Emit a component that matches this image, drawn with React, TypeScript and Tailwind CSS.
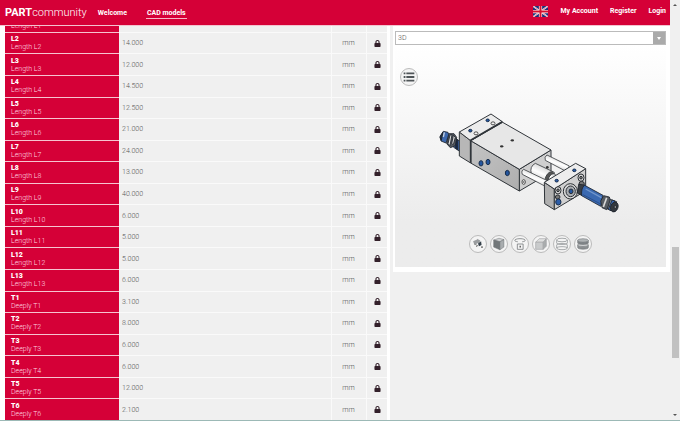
import { useState } from 'react';
import type { ReactNode } from 'react';
import { FaLock } from 'react-icons/fa';

const dimensions = [
  { name: 'L1', label: 'Length L1', value: '32.000' },
  { name: 'L2', label: 'Length L2', value: '14.000' },
  { name: 'L3', label: 'Length L3', value: '12.000' },
  { name: 'L4', label: 'Length L4', value: '14.500' },
  { name: 'L5', label: 'Length L5', value: '12.500' },
  { name: 'L6', label: 'Length L6', value: '21.000' },
  { name: 'L7', label: 'Length L7', value: '24.000' },
  { name: 'L8', label: 'Length L8', value: '13.000' },
  { name: 'L9', label: 'Length L9', value: '40.000' },
  { name: 'L10', label: 'Length L10', value: '6.000' },
  { name: 'L11', label: 'Length L11', value: '5.000' },
  { name: 'L12', label: 'Length L12', value: '5.000' },
  { name: 'L13', label: 'Length L13', value: '6.000' },
  { name: 'T1', label: 'Deeply T1', value: '3.100' },
  { name: 'T2', label: 'Deeply T2', value: '8.000' },
  { name: 'T3', label: 'Deeply T3', value: '6.000' },
  { name: 'T4', label: 'Deeply T4', value: '6.000' },
  { name: 'T5', label: 'Deeply T5', value: '12.000' },
  { name: 'T6', label: 'Deeply T6', value: '2.100' },
];

const UnionJack = () => (
  <svg viewBox="0 0 30 22" className="h-[11px] w-[15px]" role="img" aria-label="English">
    <rect width="30" height="22" fill="#1b2f7a" />
    <path d="M0 0L30 22M30 0L0 22" stroke="#fff" strokeWidth="3" />
    <path d="M0 0L30 22M30 0L0 22" stroke="#d8203c" strokeWidth="1" />
    <path d="M15 0V22M0 11H30" stroke="#fff" strokeWidth="6.5" />
    <path d="M15 0V22M0 11H30" stroke="#d5102f" strokeWidth="4" />
  </svg>
);

const Header = () => (
  <header className="relative z-10 flex h-[26px] shrink-0 items-center border-b border-[#f3c3cf] bg-[#d50037] pr-1 pl-[5px] text-[7px] leading-[10px] font-bold text-white">
    <a href="#home" className="text-[11px] leading-[14px] font-light">
      <span className="font-bold">PART</span>community
    </a>
    <nav className="ml-[10px] flex gap-[18px]">
      <a href="#welcome" className="border-b border-transparent px-px pt-px">Welcome</a>
      <a href="#models" className="border-b border-[#f6b8c6] px-px pt-px">CAD models</a>
    </nav>
    <div className="mb-[3px] ml-auto flex items-center gap-3">
      <a href="#language">
        <UnionJack />
      </a>
      <a href="#account">My Account</a>
      <a href="#register">Register</a>
      <a href="#login">Login</a>
    </div>
  </header>
);

const DimensionTable = () => (
  <div className="flex h-full min-h-0 flex-col justify-end overflow-hidden bg-white pr-[3px] pl-[5px]">
    <table className="h-[104%] w-full shrink-0 table-fixed border-collapse text-[7px] leading-[8px]">
      <colgroup>
        <col className="w-[114px]" />
        <col />
        <col className="w-[35px]" />
        <col className="w-[21px]" />
      </colgroup>
      <tbody>
        {dimensions.map((row) => (
          <tr key={row.name} className="border-t border-[#fafafa] bg-[#f0f0f0]">
            <th scope="row" className="border-t border-[#f6c4d0] bg-[#d50037] p-0 pl-[6px] text-left font-light text-[#ffd9e2]">
              <div className="font-black text-white">{row.name}</div>
              <div>{row.label}</div>
            </th>
            <td className="p-0 pl-[3px] font-light text-[#555]">{row.value}</td>
            <td className="border-l border-[#fafafa] p-0 text-center font-light text-[#555]">mm</td>
            <td className="border-l border-[#fafafa] p-0 pl-[2px]">
              <FaLock size={7} className="mx-auto text-[#33202a]" />
            </td>
          </tr>
        ))}
      </tbody>
    </table>
  </div>
);

const CylinderModel = () => (
  <svg viewBox="18 18 570 330" className="mt-[15px] h-[110px] w-[190px]" role="img" aria-label="3D model">
    <defs>
      <linearGradient id="rod" x1="0" y1="1" x2=".5" y2="0">
        <stop offset="0" stopColor="#aaa" />
        <stop offset=".6" stopColor="#fff" />
        <stop offset="1" stopColor="#ccc" />
      </linearGradient>
      <linearGradient id="side" x1="0" y1="0" x2="1" y2="1">
        <stop offset="0" stopColor="#c4c4c4" />
        <stop offset="1" stopColor="#aeaeae" />
      </linearGradient>
    </defs>

    {/* rear fitting */}
    <g stroke="#1e242c" strokeWidth="2.5" strokeLinejoin="round">
      <path d="M73 111L92 122V153L71 139Z" fill="#3d68ad" />
      <path d="M77 113L83 116V146L77 142Z" fill="#172a49" />
      <path d="M56 98L72 98L80 109L76 134L61 140L50 128Z" fill="#555a60" />
      <path d="M60 102L66 101L60 134L54 128Z" fill="#ddd" />
      <path d="M70 103L76 109L70 131L65 128Z" fill="#ccc" />
      <path d="M40 91L54 94L56 101L48 126L33 120L30 106Z" fill="#3d68ad" />
      <path d="M39 93L34 118L30 110Z" fill="#263240" />
      <path d="M43 94L40 108" stroke="#c7d3e5" strokeWidth="4" />
    </g>

    {/* housing */}
    <g stroke="#30353a" strokeWidth="3" strokeLinejoin="round">
      <path d="M268 205L363 147V214L268 270Z" fill="#cfcfcf" />
      <path d="M122 119L268 205V270L122 186Z" fill="url(#side)" />
      <path d="M122 119L218 64L363 147L268 205Z" fill="#e7e7e7" />
      <path d="M88 93L122 119V186L88 165Z" fill="#b7b7b7" />
      <path d="M88 93L183 39L217 62L122 119Z" fill="#ececec" />
      <path d="M122 186V118L217 62" fill="none" strokeWidth="5" />
    </g>
    <g fill="#24569f" stroke="#172d4c" strokeWidth="3">
      <ellipse cx="153" cy="187" rx="6" ry="8" />
      <ellipse cx="174" cy="183" rx="6" ry="8" />
      <ellipse cx="232" cy="216" rx="6" ry="8" />
      <ellipse cx="121" cy="89" rx="5" ry="4" />
      <ellipse cx="173" cy="58" rx="5" ry="4" />
    </g>
    <g fill="#f4f4f4" stroke="#333" strokeWidth="2.5">
      <ellipse cx="138" cy="97" rx="6" ry="4.5" />
      <ellipse cx="189" cy="67" rx="6" ry="4.5" />
      <ellipse cx="281" cy="243" rx="5" ry="7" />
    </g>
    <g fill="#333">
      <ellipse cx="215" cy="136" rx="5" ry="3.5" />
      <ellipse cx="247" cy="118" rx="5" ry="3.5" />
      <circle cx="281" cy="243" r="2" />
    </g>

    {/* guide rods and piston rod */}
    <g fill="url(#rod)" stroke="#3b3f42" strokeWidth="2.5" strokeLinejoin="round">
      <path d="M351 162L418 195L410 212L346 178Q342 167 351 162Z" />
      <path d="M316 187L373 214L362 251L304 219Q298 196 316 187Z" />
      <ellipse cx="359" cy="231" rx="12" ry="20" transform="rotate(25 359 231)" fill="#555" />
      <ellipse cx="366" cy="235" rx="11" ry="18" transform="rotate(25 366 235)" />
      <path d="M281 205L350 238V258L277 220Q273 209 281 205Z" />
    </g>
    <circle cx="352" cy="199" r="4" fill="#333" />

    {/* front plate */}
    <g stroke="#30353a" strokeWidth="3" strokeLinejoin="round">
      <path d="M343 244L373 264V326L344 308Z" fill="#b0b0b0" />
      <path d="M373 264L467 203V258L456 276L373 326Z" fill="#d0d0d0" />
      <path d="M343 244L437 187L467 203L373 264Z" fill="#ededed" />
    </g>
    <g fill="#d8d8d8" stroke="#2c3034" strokeWidth="3">
      <ellipse cx="421" cy="271" rx="21" ry="23" />
      <ellipse cx="422" cy="271" rx="14" ry="16" fill="#a9adb2" />
      <ellipse cx="423" cy="271" rx="6" ry="7" fill="#24569f" />
      <ellipse cx="384" cy="268" rx="9" ry="11" />
      <circle cx="384" cy="268" r="4" fill="#777" />
      <ellipse cx="453" cy="230" rx="9" ry="11" />
      <circle cx="453" cy="230" r="4" fill="#777" />
      <ellipse cx="383" cy="288" rx="7" ry="6" fill="#777" />
      <ellipse cx="455" cy="249" rx="8" ry="8" fill="#777" />
    </g>
    <g fill="#2c5da8" stroke="#172d4c" strokeWidth="3">
      <ellipse cx="380" cy="239" rx="5" ry="4" />
      <ellipse cx="433" cy="208" rx="5" ry="4" />
      <ellipse cx="385" cy="303" rx="8" ry="9" />
    </g>

    {/* front shock absorber */}
    <g stroke="#1e242c" strokeWidth="2.5" strokeLinejoin="round">
      <path d="M446 250L463 252L468 266L456 284L442 276Z" fill="#3a3f45" />
      <path d="M464 253L519 283L512 316L455 284Q453 260 464 253Z" fill="#3a69b1" />
      <path d="M467 264L514 290" stroke="#7196cb" strokeWidth="4" />
      <path d="M459 281L512 309" stroke="#2a4f8c" strokeWidth="3" />
      <path d="M521 284L538 288L543 303L530 326L516 320L512 300Z" fill="#555a60" />
      <path d="M530 290L520 318" stroke="#d8d8d8" strokeWidth="5" />
      <path d="M541 295L560 302L555 332L532 324Z" fill="#8b9299" />
      <path d="M546 297L555 300L543 329L535 325Z" fill="#3a69b1" />
      <ellipse cx="553" cy="318" rx="11" ry="15" transform="rotate(20 553 318)" fill="#33383e" />
      <circle cx="556" cy="318" r="4" fill="#9a9a9a" />
    </g>
  </svg>
);

const viewerTools: { label: string; drawing: ReactNode }[] = [
  {
    label: 'Animate',
    drawing: (
      <>
        <path d="M9 14L18 10L21 17L12 22ZM18 8L25 12L23 18L19 17Z" fill="#9a9d9f" />
        <path d="M20 19L27 14L28 22L22 25Z" fill="#35404a" />
        <path d="M12 20L20 24" stroke="#888" strokeWidth="2" />
        <circle cx="17" cy="25" r="1.5" fill="#777" />
        <circle cx="29" cy="27" r="2" fill="#555" />
      </>
    ),
  },
  {
    label: 'Views',
    drawing: (
      <g stroke="#62676a" strokeWidth="1">
        <path d="M8 11L20 7L31 10L22 15Z" fill="#cfd1d2" />
        <path d="M8 11L22 15V33L8 27Z" fill="#72777a" />
        <path d="M22 15L31 10V27L22 33Z" fill="#a9adaf" />
      </g>
    ),
  },
  {
    label: 'Rotate',
    drawing: (
      <g fill="none" stroke="#777b7e" strokeWidth="1.8">
        <path d="M15 15C4 14 7 8 20 8S36 14 25 15" />
        <path d="M14 20H27V32H14Z" />
        <path d="M19 24H22V28H19Z" fill="#555" stroke="none" />
      </g>
    ),
  },
  {
    label: 'Perspective',
    drawing: (
      <g stroke="#9b9ea0" strokeWidth="1.3">
        <path d="M8 16L16 8H32L25 16Z" fill="#dfe0e0" />
        <path d="M8 16H25V32H8Z" fill="#c9cbcc" />
        <path d="M25 16L32 8V25L25 32Z" fill="#a9acad" />
      </g>
    ),
  },
  {
    label: 'Wireframe',
    drawing: (
      <g fill="none" stroke="#898d8f" strokeWidth="1.6">
        <ellipse cx="20" cy="11" rx="12" ry="4" />
        <path d="M8 11V18C8 22 32 22 32 18V11M8 29V22C8 18 32 18 32 22V29C32 34 8 34 8 29C8 25 32 25 32 29" />
      </g>
    ),
  },
  {
    label: 'Shaded',
    drawing: (
      <g fill="#8b8f91" stroke="#696e71" strokeWidth="1.2">
        <path d="M8 22V28C8 33 32 33 32 28V22Z" />
        <ellipse cx="20" cy="22" rx="12" ry="3.5" fill="#d5d7d8" />
        <path d="M8 12V18C8 22 32 22 32 18V12Z" fill="#7f8487" />
        <ellipse cx="20" cy="12" rx="12" ry="4" fill="#b0b4b6" />
      </g>
    ),
  },
];

const RoundButton = ({ label, children }: { label: string; children: ReactNode }) => (
  <button
    type="button"
    aria-label={label}
    className="size-[18px] shrink-0 cursor-pointer rounded-full border border-[#bbb] bg-[#f4f4f4]"
  >
    <svg viewBox="2 2 36 36" className="size-4">
      {children}
    </svg>
  </button>
);

const Viewer = () => {
  const [view, setView] = useState('3D');

  return (
    <section className="ml-[3px] flex flex-col bg-white pt-[5px] pr-1 pb-[5px] pl-[2px]">
      <div className="grid h-[14px] border border-[#bbb]">
        <select
          aria-label="View"
          value={view}
          onChange={(e) => setView(e.target.value)}
          className="col-start-1 row-start-1 h-3 w-full appearance-none bg-white pl-[2px] text-[7px] leading-3 font-light text-[#555] outline-none"
        >
          <option>3D</option>
          <option>2D</option>
        </select>
        <span className="pointer-events-none col-start-1 row-start-1 flex w-3 items-center justify-center justify-self-end bg-[#aaa]">
          <svg viewBox="0 0 8 6" className="h-[3px] w-1">
            <path d="M0 0H8L4 6Z" fill="#fff" />
          </svg>
        </span>
      </div>

      <div className="flex flex-col items-center bg-linear-to-b from-white to-[#ececec] to-80% pt-[23px] pb-[14px]">
        <div className="w-full pl-[5px]">
          <RoundButton label="Menu">
            <path
              d="M8 10H12V14H8ZM14 10H32V14H14ZM8 18H12V22H8ZM14 18H32V22H14ZM8 26H12V30H8ZM14 26H32V30H14Z"
              fill="#4f5558"
            />
          </RoundButton>
        </div>
        <CylinderModel />
        <div className="mt-[18px] flex gap-[3px]">
          {viewerTools.map((tool) => (
            <RoundButton key={tool.label} label={tool.label}>
              {tool.drawing}
            </RoundButton>
          ))}
        </div>
      </div>
    </section>
  );
};

const Scrollbar = () => (
  <div className="flex w-[10px] shrink-0 flex-col items-center bg-[#f0f0f0] py-1" aria-hidden="true">
    <svg viewBox="0 0 8 4" className="h-[2px] w-1">
      <path d="M0 4L4 0L8 4Z" fill="#555" />
    </svg>
    <div className="grow-[240]" />
    <div className="w-[7px] grow-[111] bg-[#c1c1c1]" />
    <div className="grow-[56]" />
    <svg viewBox="0 0 8 4" className="h-[2px] w-1">
      <path d="M0 0L4 4L8 0Z" fill="#555" />
    </svg>
  </div>
);

export default function App() {
  return (
    <div className="flex h-screen border-b border-[#9cb9b6] bg-[#f0f0f0] font-[Roboto,sans-serif]">
      <div className="flex min-w-0 flex-1 flex-col">
        <Header />
        <main className="grid min-h-0 flex-1 grid-cols-[39fr_28fr] grid-rows-[minmax(0,1fr)]">
          <DimensionTable />
          <div>
            <Viewer />
          </div>
        </main>
      </div>
      <Scrollbar />
    </div>
  );
}
